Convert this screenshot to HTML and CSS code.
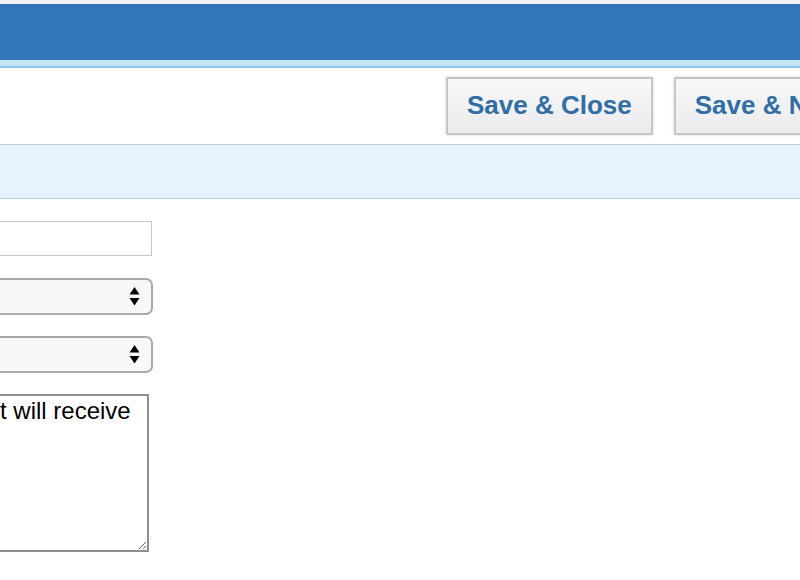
FILE: index.html
```html
<!DOCTYPE html>
<html lang="en">
<head>
<meta charset="utf-8">
<title>Edit</title>
<link rel="stylesheet" href="styles.css">
</head>
<body>
<div class="top-strip"></div>
<header class="header"></header>
<div class="subbar"></div>
<div class="toolbar">
  <button class="btn">Save &amp; Close</button>
  <button class="btn">Save &amp; New</button>
</div>
<div class="infobar"></div>
<form class="form">
  <input class="field text-field" type="text">
  <div class="field select-field">
    <svg class="arrows" width="11" height="19" viewBox="0 0 11 19"><path d="M5.5 0 L10.5 7.5 L0.5 7.5 Z M0.5 11 L10.5 11 L5.5 18.5 Z" fill="#000"/></svg>
  </div>
  <div class="field select-field">
    <svg class="arrows" width="11" height="19" viewBox="0 0 11 19"><path d="M5.5 0 L10.5 7.5 L0.5 7.5 Z M0.5 11 L10.5 11 L5.5 18.5 Z" fill="#000"/></svg>
  </div>
  <textarea class="field area-field">t will receive</textarea>
</form>
</body>
</html>
```
FILE: styles.css
```css
html, body {
  margin: 0;
  padding: 0;
  background: #fff;
  overflow: hidden;
  font-family: "Liberation Sans", Arial, sans-serif;
}
.top-strip {
  height: 4px;
  background: #f2f2f2;
}
.header {
  height: 56px;
  background: #3176b9;
}
.subbar {
  height: 6px;
  background: #c3e3f8;
  border-bottom: 2px solid #96c3ee;
}
.toolbar {
  height: 67px;
  padding: 9px 0 0 446px;
  display: flex;
  gap: 21px;
  align-items: flex-start;
  border-bottom: 1px solid #b6cfe0;
  white-space: nowrap;
  overflow: hidden;
}
.btn {
  flex: none;
  height: 58px;
  padding: 0 19px 2px;
  border: 2px solid #c6c6c6;
  border-radius: 1px;
  background: linear-gradient(#f8f8f8, #ebebeb);
  box-shadow: 0 0 3px rgba(0,0,0,0.18);
  color: #2f6ea6;
  font-family: "Liberation Sans", Arial, sans-serif;
  font-weight: bold;
  font-size: 26px;
  line-height: 1;
}
.infobar {
  height: 53px;
  background: #e6f3fc;
  border-bottom: 1px solid #b6cfe0;
}
.form {
  display: flex;
  flex-direction: column;
  align-items: flex-start;
  padding-top: 22px;
  gap: 21px;
  margin: 0;
}
.field {
  box-sizing: border-box;
  margin: 0;
  display: block;
}
.text-field {
  width: 152px;
  height: 35px;
  border: 1px solid #c6c6c6;
  border-left: none;
  background: #fff;
  outline: none;
}
.select-field {
  width: 153px;
  height: 37px;
  border: 2px solid #a9a9a9;
  border-left: none;
  border-radius: 0 7px 7px 0;
  background: #f8f8f8;
  display: flex;
  align-items: center;
  justify-content: flex-end;
  padding-right: 11px;
}
.select-field:first-of-type {
  margin-top: 1px;
}
.arrows {
  display: block;
}
.area-field {
  width: 149px;
  height: 158px;
  border: 2px solid #8e8e8e;
  border-left: none;
  padding: 2px 0 0 0;
  font-family: "Liberation Sans", Arial, sans-serif;
  font-size: 24px;
  line-height: 1.1;
  color: #000;
  resize: both;
  outline: none;
  overflow: hidden;
}
```
